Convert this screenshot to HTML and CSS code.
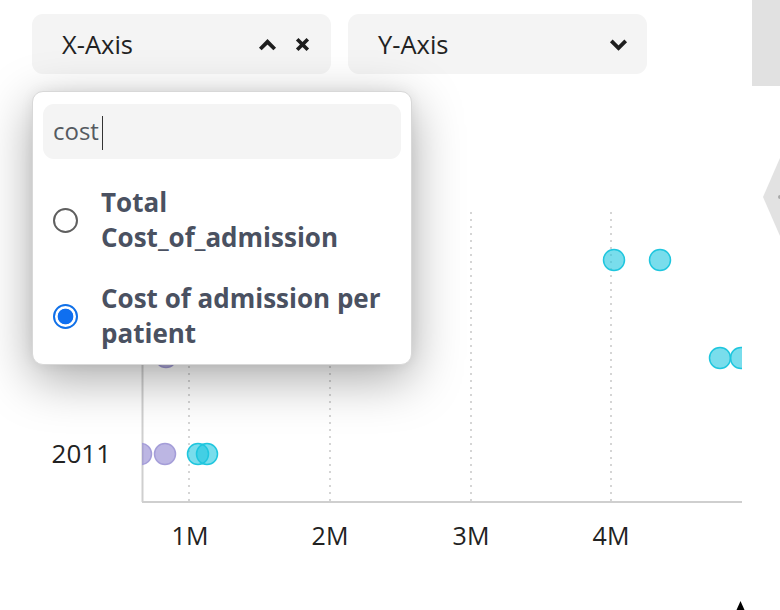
FILE: index.html
```html
<!DOCTYPE html>
<html lang="en">
<head>
<meta charset="utf-8">
<title>Chart axis picker</title>
<link rel="stylesheet" href="styles.css">
</head>
<body>
<div class="page">
  <header class="toolbar">
    <div class="select select-open">
      <span class="select-label">X-Axis</span>
      <svg class="icon icon-chevron" viewBox="0 0 19 13" width="19" height="13"><path d="M2.3 11 L9.5 3.8 L16.7 11"/></svg>
      <svg class="icon icon-close" viewBox="0 0 15 15" width="15" height="15"><path d="M2.2 2.2 L12.8 12.8 M12.8 2.2 L2.2 12.8"/></svg>
    </div>
    <div class="select">
      <span class="select-label">Y-Axis</span>
      <svg class="icon icon-chevron" viewBox="0 0 19 13" width="19" height="13"><path d="M2.3 2.8 L9.5 10 L16.7 2.8"/></svg>
    </div>
    <div class="side-panel"></div>
  </header>

  <svg class="chart" viewBox="0 86 780 524" width="780" height="524">
    <defs>
      <clipPath id="plot"><rect x="142" y="180" width="600" height="322"/></clipPath>
    </defs>
    <g class="grid">
      <line x1="189" y1="212" x2="189" y2="502"/>
      <line x1="330" y1="212" x2="330" y2="502"/>
      <line x1="471" y1="212" x2="471" y2="502"/>
      <line x1="611" y1="212" x2="611" y2="502"/>
    </g>
    <line class="axis" x1="142.5" y1="212" x2="142.5" y2="502"/>
    <line class="axis" x1="142" y1="502" x2="742" y2="502"/>
    <g clip-path="url(#plot)">
      <circle class="dot-purple" cx="141" cy="454" r="10.5"/>
      <circle class="dot-purple" cx="165" cy="454" r="10.5"/>
      <circle class="dot-purple" cx="166" cy="357" r="10.5"/>
      <circle class="dot-cyan" cx="198" cy="454" r="10.5"/>
      <circle class="dot-cyan" cx="207" cy="454" r="10.5"/>
      <circle class="dot-cyan" cx="614" cy="260" r="10.5"/>
      <circle class="dot-cyan" cx="660" cy="260" r="10.5"/>
      <circle class="dot-cyan" cx="720" cy="358" r="10.5"/>
      <circle class="dot-cyan" cx="741" cy="358" r="10.5"/>
    </g>
    <text class="tick tick-y" x="111" y="463" text-anchor="end">2011</text>
    <text class="tick" x="190" y="545" text-anchor="middle">1M</text>
    <text class="tick" x="330" y="545" text-anchor="middle">2M</text>
    <text class="tick" x="471" y="545" text-anchor="middle">3M</text>
    <text class="tick" x="611" y="545" text-anchor="middle">4M</text>
    <polygon class="handle" points="780,158 763,197 780,236"/>
    <circle class="handle-dot" cx="780" cy="197" r="2"/>
    <polygon class="cursor" points="740.5,601 744.5,610 736.5,610"/>
  </svg>

  <div class="dropdown">
    <div class="search">cost<span class="caret"></span></div>
    <ul class="options">
      <li class="option">
        <span class="radio"></span>
        <span class="option-text">Total Cost_of_admission</span>
      </li>
      <li class="option">
        <span class="radio radio-checked"></span>
        <span class="option-text">Cost of admission per patient</span>
      </li>
    </ul>
  </div>
</div>
</body>
</html>
```

FILE: styles.css
```css
html, body {
  margin: 0;
  padding: 0;
  background: #ffffff;
}

body {
  font-family: "Open Sans", "Noto Sans", sans-serif;
  color: #222222;
  width: 780px;
  height: 610px;
  overflow: hidden;
}

.page {
  position: relative;
  width: 780px;
  height: 610px;
}

.toolbar {
  display: flex;
  align-items: flex-start;
  gap: 17px;
  padding-left: 32px;
  height: 86px;
}

.select {
  margin-top: 14px;
  width: 299px;
  height: 60px;
  box-sizing: border-box;
  background: #f4f4f4;
  border-radius: 11px;
  display: flex;
  align-items: center;
  padding: 0 19px 0 30px;
  gap: 18px;
}

.select-open {
  padding-right: 21px;
}

.select-label {
  flex: 1;
  font-size: 25.5px;
  line-height: 30px;
  color: #222222;
  padding-bottom: 1px;
}

.icon {
  display: block;
  fill: none;
  stroke: #1e1e1e;
  stroke-width: 3.8;
  stroke-linejoin: miter;
}

.icon-close {
  stroke-width: 3.6;
}

.side-panel {
  margin-left: auto;
  width: 28px;
  height: 86px;
  background: #e1e1e1;
}

.chart {
  display: block;
}

.grid line {
  stroke: #c8c8c8;
  stroke-width: 1.5;
  stroke-dasharray: 2 5;
}

.axis {
  stroke: #cfcfcf;
  stroke-width: 2;
}

.dot-purple {
  fill: #8f86d0;
  fill-opacity: 0.6;
  stroke: #a49dd8;
  stroke-width: 1.5;
}

.dot-cyan {
  fill: #1fc7df;
  fill-opacity: 0.6;
  stroke: #1ec6de;
  stroke-width: 1.5;
}

.tick {
  font-family: "Open Sans", "Noto Sans", sans-serif;
  font-size: 25px;
  fill: #222222;
}

.tick-y {
  font-size: 26px;
}

.handle {
  fill: #e2e2e2;
}

.handle-dot {
  fill: #a8a8a8;
}

.cursor {
  fill: #000000;
}

.dropdown {
  position: absolute;
  left: 32px;
  top: 91px;
  width: 380px;
  height: 274px;
  box-sizing: border-box;
  background: #ffffff;
  border: 1px solid #d8d8d8;
  border-radius: 11px;
  padding: 12px 10px 0 10px;
  box-shadow: 0 14px 50px rgba(0, 0, 0, 0.34), 0 0 14px rgba(0, 0, 0, 0.06);
}

.search {
  height: 55px;
  box-sizing: border-box;
  background: #f4f4f4;
  border-radius: 11px;
  padding: 0 10px;
  display: flex;
  align-items: center;
  font-size: 24px;
  color: #555a60;
  padding-bottom: 2px;
}

.caret {
  display: inline-block;
  width: 1.5px;
  height: 34px;
  background: #333333;
  margin-left: 3px;
  margin-top: 4px;
}

.options {
  list-style: none;
  margin: 14px 0 0 0;
  padding: 0;
  display: flex;
  flex-direction: column;
  gap: 2px;
}

.option {
  display: flex;
  align-items: center;
  gap: 23px;
  padding: 12px 10px 12px 10px;
}

.radio {
  flex: none;
  width: 25px;
  height: 25px;
  box-sizing: border-box;
  border: 2px solid #5f5f5f;
  border-radius: 50%;
  background: #ffffff;
}

.radio-checked {
  border: 2.5px solid #1070e8;
  background: radial-gradient(circle, #0f6ff0 0 7.5px, #ffffff 8.2px);
}

.option-text {
  font-size: 26px;
  line-height: 35px;
  font-weight: 700;
  color: #4a5161;
}
```
